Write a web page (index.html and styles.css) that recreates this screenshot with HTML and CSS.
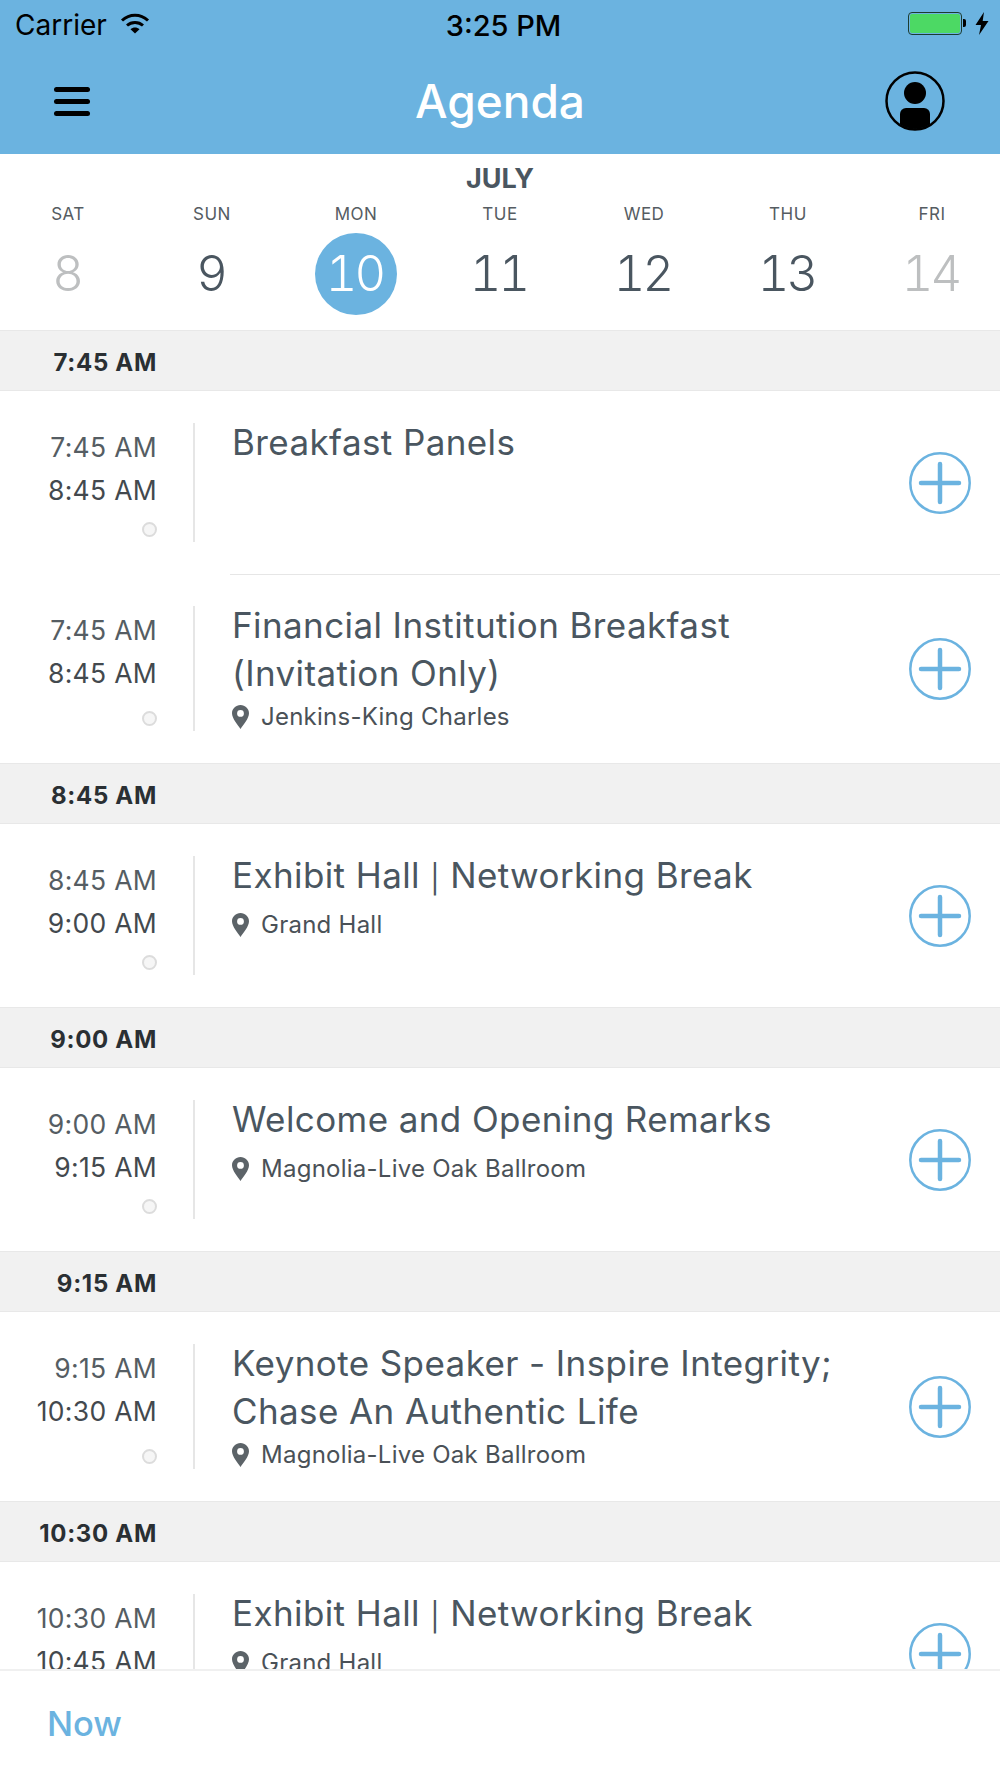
FILE: index.html
```html
<!DOCTYPE html>
<html>
<head>
    <title>Agenda</title>
    <link rel="stylesheet" href="styles.css">
</head>
<body>
    <svg class="sprites" width="0" height="0">
        <symbol id="plus" viewBox="0 0 62 62">
            <circle cx="31" cy="31" r="29.700" fill="none" stroke="#6bb3e0" stroke-width="2.500"/>
            <path d="M31 12V50M12 31H50" fill="none" stroke="#6bb3e0" stroke-width="4.500" stroke-linecap="round"/>
        </symbol>
        <symbol id="pin" viewBox="0 0 17 24">
            <path fill-rule="evenodd" d="M8.5 0C3.8 0 0 3.7 0 8.3 0 13.5 5.7 20 8.5 24 11.3 20 17 13.5 17 8.3 17 3.7 13.200 0 8.500 0ZM8.500 5A3.400 3.400 0 1 1 8.500 11.800 3.400 3.400 0 0 1 8.500 5Z" fill="#5c6368"/>
        </symbol>
    </svg>

    <div class="topbar">
        <div class="status">
            <div class="status-left">
                <span>Carrier</span>
                <svg class="wifi" width="30" height="22" viewBox="0 0 30 22">
                    <path d="M2 8.500C9.500 1.500 20.500 1.500 28 8.500" fill="none" stroke="#000" stroke-width="3"/>
                    <path d="M7 13.500C11.500 9.500 18.500 9.500 23 13.500" fill="none" stroke="#000" stroke-width="3"/>
                    <path d="M10.500 17.200C13 15 17 15 19.500 17.200L15 21.500Z" fill="#000"/>
                </svg>
            </div>
            <div class="status-time">3:25 PM</div>
            <div class="status-right">
                <div class="battery"><div class="battery-fill"></div></div>
                <div class="battery-tip"></div>
                <svg class="bolt" width="14" height="23" viewBox="0 0 13 23">
                    <path d="M8.500 0L0 13H5.500L3.500 23L13 9H7.200Z" fill="#000"/>
                </svg>
            </div>
        </div>
        <div class="nav">
            <div class="menu"><span></span><span></span><span></span></div>
            <h1>Agenda</h1>
            <svg class="profile" width="60" height="60" viewBox="0 0 60 60">
                <defs><clipPath id="ring"><circle cx="30" cy="30" r="28"/></clipPath></defs>
                <circle cx="30" cy="22" r="11" fill="#000"/>
                <rect x="15" y="37" width="30" height="30" rx="6" fill="#000" clip-path="url(#ring)"/>
                <circle cx="30" cy="30" r="28.500" fill="none" stroke="#000" stroke-width="2.500"/>
            </svg>
        </div>
    </div>

    <div class="calendar">
        <div class="month">JULY</div>
        <div class="days">
            <div class="day off"><span class="dow">SAT</span><span class="num">8</span></div>
            <div class="day"><span class="dow">SUN</span><span class="num">9</span></div>
            <div class="day selected"><span class="dow">MON</span><span class="num">10</span></div>
            <div class="day"><span class="dow">TUE</span><span class="num">11</span></div>
            <div class="day"><span class="dow">WED</span><span class="num">12</span></div>
            <div class="day"><span class="dow">THU</span><span class="num">13</span></div>
            <div class="day off"><span class="dow">FRI</span><span class="num">14</span></div>
        </div>
    </div>

    <div class="list">
        <div class="section"><span>7:45 AM</span></div>
        <div class="row">
            <div class="times"><span>7:45 AM</span><span class="end">8:45 AM</span><i class="dot"></i></div>
            <div class="info"><div class="title">Breakfast Panels</div></div>
            <svg class="add"><use href="#plus"/></svg>
        </div>
        <div class="sep"></div>
        <div class="row">
            <div class="times"><span>7:45 AM</span><span class="end">8:45 AM</span><i class="dot"></i></div>
            <div class="info">
                <div class="title">Financial Institution Breakfast (Invitation Only)</div>
                <div class="place"><svg class="pin"><use href="#pin"/></svg>Jenkins-King Charles</div>
            </div>
            <svg class="add"><use href="#plus"/></svg>
        </div>

        <div class="section"><span>8:45 AM</span></div>
        <div class="row">
            <div class="times"><span>8:45 AM</span><span class="end">9:00 AM</span><i class="dot"></i></div>
            <div class="info">
                <div class="title">Exhibit Hall <span class="bar">|</span> Networking Break</div>
                <div class="place"><svg class="pin"><use href="#pin"/></svg>Grand Hall</div>
            </div>
            <svg class="add"><use href="#plus"/></svg>
        </div>

        <div class="section"><span>9:00 AM</span></div>
        <div class="row">
            <div class="times"><span>9:00 AM</span><span class="end">9:15 AM</span><i class="dot"></i></div>
            <div class="info">
                <div class="title">Welcome and Opening Remarks</div>
                <div class="place"><svg class="pin"><use href="#pin"/></svg>Magnolia-Live Oak Ballroom</div>
            </div>
            <svg class="add"><use href="#plus"/></svg>
        </div>

        <div class="section"><span>9:15 AM</span></div>
        <div class="row">
            <div class="times"><span>9:15 AM</span><span class="end">10:30 AM</span><i class="dot"></i></div>
            <div class="info">
                <div class="title">Keynote Speaker - Inspire Integrity; Chase An Authentic Life</div>
                <div class="place"><svg class="pin"><use href="#pin"/></svg>Magnolia-Live Oak Ballroom</div>
            </div>
            <svg class="add"><use href="#plus"/></svg>
        </div>

        <div class="section"><span>10:30 AM</span></div>
        <div class="row">
            <div class="times"><span>10:30 AM</span><span class="end">10:45 AM</span><i class="dot"></i></div>
            <div class="info">
                <div class="title">Exhibit Hall <span class="bar">|</span> Networking Break</div>
                <div class="place"><svg class="pin"><use href="#pin"/></svg>Grand Hall</div>
            </div>
            <svg class="add"><use href="#plus"/></svg>
        </div>
    </div>

    <div class="footer">Now</div>
</body>
</html>
```

FILE: styles.css
```css
html, body {
    height: 100%;
}
body {
    margin: 0;
    height: 1778px;
    overflow: hidden;
    display: flex;
    flex-direction: column;
    font-family: Inter, "Liberation Sans", sans-serif;
    background-color: #fff;
    color: #4a5660;
}
.sprites {
    position: absolute;
}
.topbar {
    background-color: #6bb3e0;
    height: 154px;
    flex-shrink: 0;
    color: #000;
}
.status {
    height: 46px;
    box-sizing: border-box;
    padding: 4px 11px 0 15px;
    display: flex;
    align-items: center;
    justify-content: space-between;
    position: relative;
    font-size: 28px;
}
.status-left {
    display: flex;
    align-items: center;
    gap: 13px;
}
.wifi {
    margin-top: -5px;
}
.status-time {
    position: absolute;
    left: 7px;
    right: 0;
    text-align: center;
    font-weight: 500;
    font-size: 29px;
    pointer-events: none;
}
.status-right {
    display: flex;
    align-items: center;
    margin-top: -4px;
}
.battery {
    width: 54px;
    height: 23px;
    box-sizing: border-box;
    border: 1px solid #1c3c30;
    border-radius: 4px;
    padding: 1px;
}
.battery-fill {
    background-color: #4cd964;
    border-radius: 2px;
    height: 100%;
}
.battery-tip {
    width: 3px;
    height: 8px;
    margin-left: 1px;
    background-color: #000;
    border-radius: 0 2px 2px 0;
}
.bolt {
    margin-left: 9px;
}
.nav {
    height: 108px;
    box-sizing: border-box;
    padding: 2px 55px 0 54px;
    display: flex;
    align-items: center;
    justify-content: space-between;
    position: relative;
}
.nav h1 {
    position: absolute;
    left: 0;
    right: 0;
    margin: 0;
    text-align: center;
    color: #fff;
    font-size: 46px;
    font-weight: 500;
}
.menu {
    display: flex;
    flex-direction: column;
    gap: 7px;
    width: 36px;
}
.menu span {
    height: 5px;
    background-color: #000;
    border-radius: 3px;
}
.calendar {
    height: 176px;
    flex-shrink: 0;
    overflow: hidden;
}
.month {
    text-align: center;
    font-size: 27px;
    font-weight: 700;
    line-height: 30px;
    margin-top: 10px;
}
.days {
    display: grid;
    grid-template-columns: repeat(7, 144px);
    justify-content: center;
}
.day {
    display: flex;
    flex-direction: column;
    align-items: center;
}
.dow {
    font-size: 17px;
    line-height: 24px;
    margin-top: 8px;
    color: #555c62;
    letter-spacing: 0.5px;
}
.num {
    width: 82px;
    height: 82px;
    line-height: 82px;
    margin-top: 7px;
    text-align: center;
    text-indent: -3px;
    border-radius: 50%;
    font-size: 49px;
    font-weight: 300;
    font-variant-numeric: tabular-nums;
    letter-spacing: -3px;
}
.off .num {
    color: #bdbfc0;
}
.selected .num {
    background-color: #6bb3e0;
    color: #fff;
}
.list {
    flex: 1;
    overflow: hidden;
}
.section {
    height: 61px;
    box-sizing: border-box;
    background-color: #f1f1f1;
    border-top: 1px solid #e8e8e8;
    border-bottom: 1px solid #e8e8e8;
    display: flex;
    align-items: center;
    justify-content: flex-end;
    padding: 3px 843px 0 0;
    font-size: 24px;
    font-weight: 700;
    color: #2a2f33;
    white-space: nowrap;
    letter-spacing: 0.7px;
}
.row {
    display: flex;
    padding: 32px 0;
}
.times {
    width: 195px;
    min-height: 119px;
    box-sizing: border-box;
    padding: 3px 36px 0 0;
    border-right: 2px solid #e6e6e6;
    display: flex;
    flex-direction: column;
    align-items: flex-end;
    flex-shrink: 0;
    font-size: 26.500px;
    line-height: 43px;
    letter-spacing: 0.3px;
    color: #555d63;
}
.times .end {
    color: #43494e;
}
.dot {
    width: 15px;
    height: 15px;
    box-sizing: border-box;
    border: 2px solid #dcdcdc;
    border-radius: 50%;
    background-color: #f6f6f6;
    margin-top: auto;
    margin-bottom: 5px;
}
.info {
    flex: 1;
    padding: 0 30px 0 37px;
}
.title {
    margin-top: -5px;
    min-height: 54px;
    font-size: 35px;
    line-height: 48px;
    letter-spacing: 0.4px;
    color: #4a5660;
}
.bar {
    font-size: 28px;
    vertical-align: -1px;
    line-height: 1;
}
.place {
    display: flex;
    align-items: center;
    margin-top: 6px;
    line-height: 28px;
    font-size: 24px;
    letter-spacing: 0.25px;
    color: #4a5157;
    white-space: nowrap;
}
.pin {
    width: 17px;
    height: 24px;
    margin-right: 12px;
    flex-shrink: 0;
}
.add {
    width: 62px;
    height: 62px;
    flex-shrink: 0;
    align-self: center;
    margin-right: 29px;
}
.sep {
    height: 1px;
    margin: 0 0 -1px 230px;
    background-color: #e6e6e6;
}
.footer {
    height: 109px;
    flex-shrink: 0;
    box-sizing: border-box;
    border-top: 2px solid #f0f0f0;
    background-color: #fff;
    padding-left: 47px;
    line-height: 106px;
    font-size: 34.500px;
    font-weight: 500;
    color: #6bb3e0;
}
```
